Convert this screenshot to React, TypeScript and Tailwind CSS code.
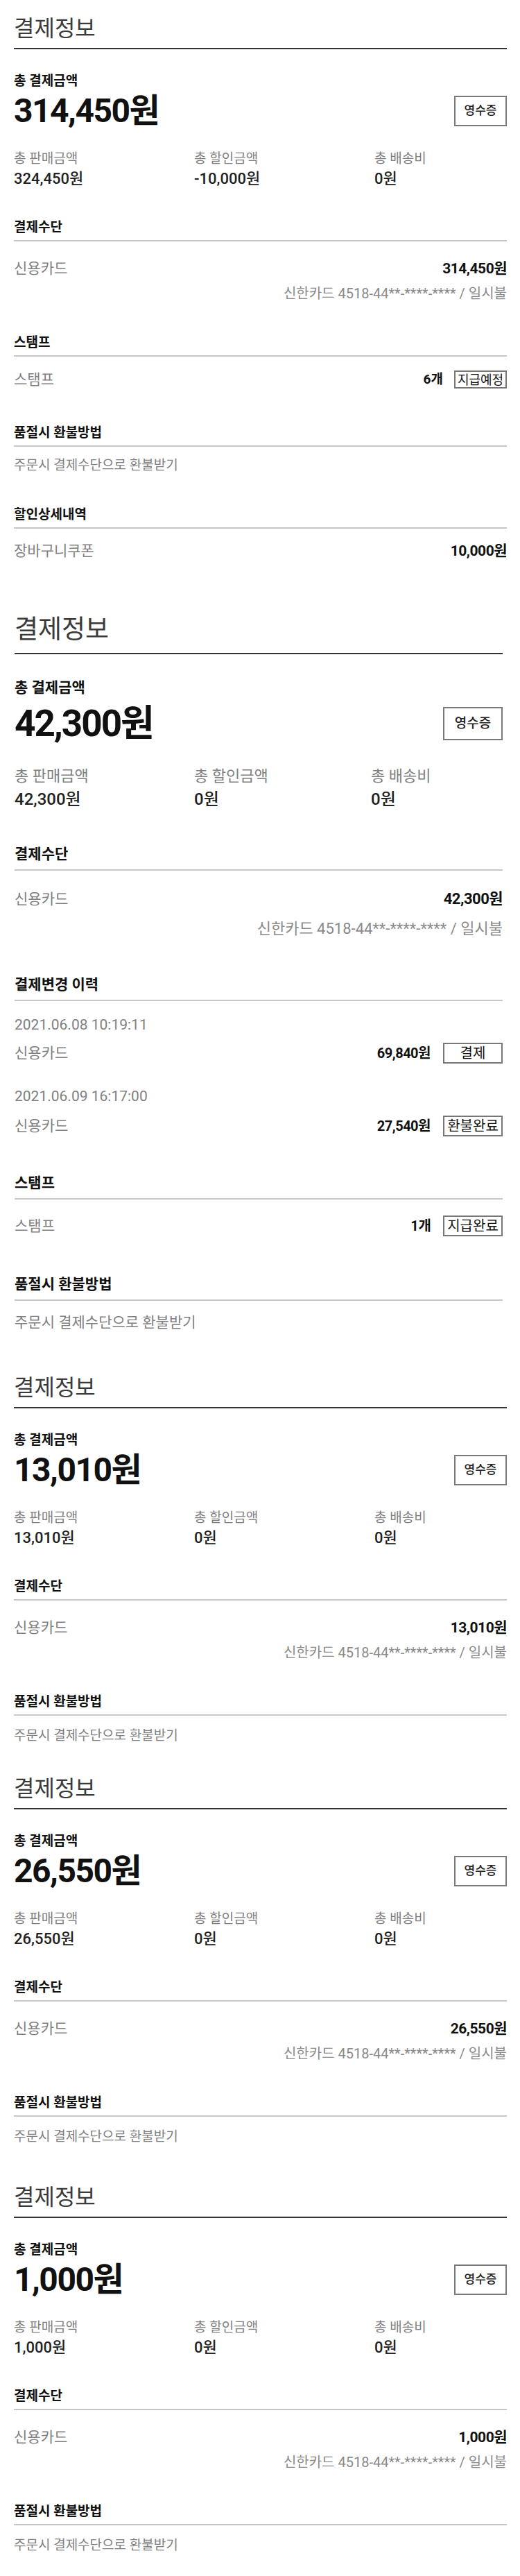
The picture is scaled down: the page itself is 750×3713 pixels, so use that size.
import React from "react";

type Scale = "a" | "b";

// 두 가지 캡처 크기 (a: 기본, b: 약간 확대된 화면)
const SIZE = {
  a: {
    pad: "pl-5 pr-[19px]",
    title: "pb-2 text-[32px] leading-[40px]",
    totalLabel: "mt-[34px] text-[19px] leading-[24px]",
    amountRow: "mt-[9px] h-[44px]",
    amount: "text-[48px] leading-[44px] tracking-[-1.5px]",
    receipt: "w-[76px] h-[44px] text-[17px]",
    grid: "mt-[35px] grid-cols-[260px_260px_1fr]",
    gridLabel: "text-[19px] leading-[24px]",
    gridValue: "mt-[5px] text-[22px] leading-[24px]",
    head: "pb-[6px] text-[19px] leading-[24px]",
    payHead: "mt-[46px]",
    payRow: "mt-[27px]",
    text: "text-[21px] leading-[24px]",
    money: "text-[21px] leading-[24px] tracking-[-0.5px]",
    sub: "mt-3 text-[20px] leading-[24px]",
    tagRow: "h-[26px]",
    tag: "w-[76px] h-[26px] text-[18px]",
    count: "text-[19px]",
    note: "text-[19px] leading-[24px]",
  },
  b: {
    pad: "pl-[21px] pr-[25px]",
    title: "pb-[11px] text-[37px] leading-[44px]",
    totalLabel: "mt-[35px] text-[21px] leading-[26px]",
    amountRow: "mt-[15px] h-[48px]",
    amount: "text-[53px] leading-[48px] tracking-[-2px]",
    receipt: "w-[86px] h-[48px] text-[19px]",
    grid: "mt-[39px] grid-cols-[259px_255px_1fr]",
    gridLabel: "text-[22px] leading-[26px]",
    gridValue: "mt-[7px] text-[24px] leading-[26px]",
    head: "pb-[9px] text-[21px] leading-[26px]",
    payHead: "mt-[53px]",
    payRow: "mt-[28px]",
    text: "text-[21px] leading-[26px]",
    money: "text-[22px] leading-[26px] tracking-[-0.5px]",
    sub: "mt-[17px] text-[22px] leading-[26px]",
    tagRow: "h-[30px]",
    tag: "w-[86px] h-[30px] text-[20px]",
    count: "text-[20px]",
    note: "text-[21px] leading-[26px]",
  },
};

function Head({ s, className, children }: { s: Scale; className: string; children: React.ReactNode }) {
  return (
    <h3 className={`border-b-2 border-[#c8c8c8] font-bold text-[#111] ${SIZE[s].head} ${className}`}>
      {children}
    </h3>
  );
}

function Tag({ s, children }: { s: Scale; children: React.ReactNode }) {
  return (
    <span
      className={`flex items-center justify-center border-2 border-[#777] bg-white text-[#111] ${SIZE[s].tag}`}
    >
      {children}
    </span>
  );
}

type History = { date: string; amount: string; status: string };

type SectionProps = {
  s: Scale;
  top: string;
  total: string;
  sale: string;
  discount: string;
  card: string;
  history?: History[];
  stamp?: { count: string; status: string };
  coupon?: { name: string; amount: string };
};

function Section({ s, top, total, sale, discount, card, history, stamp, coupon }: SectionProps) {
  const z = SIZE[s];
  const gray = "text-[#808080]";

  return (
    <section className={`${z.pad} ${top}`}>
      {/* 헤더 */}
      <h2 className={`border-b-2 border-[#333] font-normal text-[#3a3a3a] ${z.title}`}>결제정보</h2>

      {/* 총 결제금액 */}
      <p className={`font-bold text-[#111] ${z.totalLabel}`}>총 결제금액</p>
      <div className={`flex items-center justify-between ${z.amountRow}`}>
        <p className={`font-bold text-[#111] ${z.amount}`}>{total}</p>
        <button
          className={`flex items-center justify-center border-2 border-[#7a7a7a] bg-white font-medium text-[#222] ${z.receipt}`}
        >
          영수증
        </button>
      </div>

      <div className={`grid ${z.grid}`}>
        {[
          ["총 판매금액", sale],
          ["총 할인금액", discount],
          ["총 배송비", "0원"],
        ].map(([label, value]) => (
          <div key={label}>
            <p className={`${gray} ${z.gridLabel}`}>{label}</p>
            <p className={`font-medium text-[#222] ${z.gridValue}`}>{value}</p>
          </div>
        ))}
      </div>

      {/* 결제수단 */}
      <Head s={s} className={z.payHead}>
        결제수단
      </Head>
      <div className={`flex items-center justify-between ${z.payRow}`}>
        <span className={`${gray} ${z.text}`}>신용카드</span>
        <span className={`font-bold text-[#111] ${z.money}`}>{card}</span>
      </div>
      <p className={`text-right text-[#8a8a8a] ${z.sub}`}>신한카드 4518-44**-****-**** / 일시불</p>

      {/* 결제변경 이력 */}
      {history && (
        <>
          <Head s={s} className="mt-[54px]">
            결제변경 이력
          </Head>
          {history.map((h, i) => (
            <div key={h.date}>
              <p className={`${gray} text-[21px] leading-[26px] ${i === 0 ? "mt-[21px]" : "mt-[34px]"}`}>{h.date}</p>
              <div className={`flex items-center justify-between ${z.tagRow} ${i === 0 ? "mt-[13px]" : "mt-[15px]"}`}>
                <span className={`${gray} ${z.text}`}>신용카드</span>
                <div className="flex items-center gap-[18px]">
                  <span className="text-[20px] font-bold tracking-[-0.5px] text-[#111]">{h.amount}</span>
                  <Tag s={s}>{h.status}</Tag>
                </div>
              </div>
            </div>
          ))}
        </>
      )}

      {/* 스탬프 */}
      {stamp && (
        <>
          <Head s={s} className={s === "a" ? "mt-[47px]" : "mt-[54px]"}>
            스탬프
          </Head>
          <div className={`flex items-center justify-between ${z.tagRow} ${s === "a" ? "mt-5" : "mt-[23px]"}`}>
            <span className={`${gray} ${z.text}`}>스탬프</span>
            <div className={`flex items-center ${s === "a" ? "gap-4" : "gap-[17px]"}`}>
              <span className={`font-bold text-[#111] ${z.count}`}>{stamp.count}</span>
              <Tag s={s}>{stamp.status}</Tag>
            </div>
          </div>
        </>
      )}

      {/* 품절시 환불방법 */}
      <Head s={s} className={stamp ? (s === "a" ? "mt-[52px]" : "mt-[56px]") : "mt-[47px]"}>
        품절시 환불방법
      </Head>
      <p className={`${gray} ${z.note} ${s === "b" ? "mt-[18px]" : coupon ? "mt-[15px]" : "mt-[17px]"}`}>
        주문시 결제수단으로 환불받기
      </p>

      {/* 할인상세내역 */}
      {coupon && (
        <>
          <Head s={s} className="mt-[47px]">
            할인상세내역
          </Head>
          <div className="mt-5 flex items-center justify-between">
            <span className={`${gray} ${z.text}`}>{coupon.name}</span>
            <span className={`font-bold text-[#111] ${z.money}`}>{coupon.amount}</span>
          </div>
        </>
      )}
    </section>
  );
}

export default function App() {
  return (
    <div className="min-h-[3713px] w-[750px] bg-white pb-8 [font-family:Roboto,'Noto_Sans_CJK_KR',sans-serif]">
      <Section
        s="a"
        top="pt-[21px]"
        total="314,450원"
        sale="324,450원"
        discount="-10,000원"
        card="314,450원"
        stamp={{ count: "6개", status: "지급예정" }}
        coupon={{ name: "장바구니쿠폰", amount: "10,000원" }}
      />
      <Section
        s="b"
        top="pt-[80px]"
        total="42,300원"
        sale="42,300원"
        discount="0원"
        card="42,300원"
        history={[
          { date: "2021.06.08 10:19:11", amount: "69,840원", status: "결제" },
          { date: "2021.06.09 16:17:00", amount: "27,540원", status: "환불완료" },
        ]}
        stamp={{ count: "1개", status: "지급완료" }}
      />
      <Section s="a" top="pt-[61px]" total="13,010원" sale="13,010원" discount="0원" card="13,010원" />
      <Section s="a" top="pt-[44px]" total="26,550원" sale="26,550원" discount="0원" card="26,550원" />
      <Section s="a" top="pt-[55px]" total="1,000원" sale="1,000원" discount="0원" card="1,000원" />
    </div>
  );
}
